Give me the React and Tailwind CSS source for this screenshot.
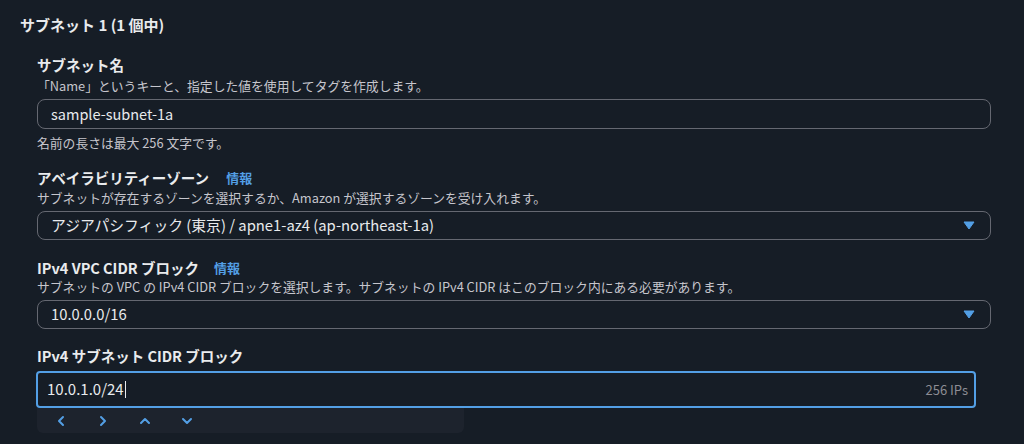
import React from "react";

const font = { fontFamily: '"Noto Sans CJK JP", "Noto Sans", sans-serif' };

function Caret() {
  return (
    <svg width="12" height="9" viewBox="0 0 12 9" className="shrink-0">
      <path d="M1 1 L11 1 L6 8 Z" fill="#539fe5" stroke="#539fe5" strokeWidth="1" strokeLinejoin="round" />
    </svg>
  );
}

function Chevron({ d }) {
  return (
    <svg width="14" height="14" viewBox="0 0 14 14" fill="none">
      <path d={d} stroke="#539fe5" strokeWidth="2" strokeLinecap="round" strokeLinejoin="round" />
    </svg>
  );
}

export default function App() {
  return (
    <div className="w-[1024px] h-[444px] overflow-hidden bg-[#161d26] text-[#e9ebed]" style={font}>
      <div className="pl-[20px] pt-[15px]">
        <div className="text-[15px] leading-[20px] font-bold">サブネット 1 (1 個中)</div>
      </div>
      <div className="pl-[37px] pr-[33px]">
        {/* Subnet name */}
        <div className="mt-[20px] text-[14.5px] leading-[20px] font-bold">サブネット名</div>
        <div className="mt-[2px] text-[12.8px] leading-[18px] text-[#c6c6cd]">「Name」というキーと、指定した値を使用してタグを作成します。</div>
        <div className="mt-[4px] h-[30px] rounded-[8px] border border-[#656871] flex items-center px-[13px] text-[14.5px]">
          sample-subnet-1a
        </div>
        <div className="mt-[5px] text-[12.8px] leading-[18px] text-[#c6c6cd]">名前の長さは最大 256 文字です。</div>

        {/* AZ */}
        <div className="mt-[16px] flex items-center text-[14.5px] leading-[20px]">
          <span className="font-bold">アベイラビリティーゾーン</span>
          <span className="ml-[17px] text-[13px] font-bold text-[#539fe5]">情報</span>
        </div>
        <div className="mt-[1px] text-[12.8px] leading-[18px] text-[#c6c6cd]">サブネットが存在するゾーンを選択するか、Amazon が選択するゾーンを受け入れます。</div>
        <div className="mt-[4px] h-[29px] rounded-[8px] border border-[#656871] flex items-center justify-between pl-[13px] pr-[15px] text-[14.8px]">
          <span>アジアパシフィック (東京) / apne1-az4 (ap-northeast-1a)</span>
          <Caret />
        </div>

        {/* VPC CIDR */}
        <div className="mt-[18px] flex items-center text-[14.5px] leading-[20px]">
          <span className="font-bold">IPv4 VPC CIDR ブロック</span>
          <span className="ml-[15px] text-[13px] font-bold text-[#539fe5]">情報</span>
        </div>
        <div className="mt-[0px] text-[12.8px] leading-[18px] text-[#c6c6cd]">サブネットの VPC の IPv4 CIDR ブロックを選択します。サブネットの IPv4 CIDR はこのブロック内にある必要があります。</div>
        <div className="mt-[4px] h-[29px] rounded-[8px] border border-[#656871] flex items-center justify-between pl-[13px] pr-[15px] text-[14.8px]">
          <span>10.0.0.0/16</span>
          <Caret />
        </div>

        {/* Subnet CIDR */}
        <div className="mt-[17px] text-[14.5px] leading-[20px] font-bold">IPv4 サブネット CIDR ブロック</div>
      </div>
      <div className="pl-[36px] pr-[48px]">
        <div className="mt-[5px] h-[37px] rounded-[4px] border-2 border-[#539fe5] flex items-center justify-between pl-[9px] pr-[6px]">
          <span className="text-[15px] flex items-center">
            10.0.1.0/24<span className="inline-block w-[1px] h-[17px] bg-[#e9ebed] ml-[1px]" />
          </span>
          <span className="text-[13px] text-[#8d8d94]">256 IPs</span>
        </div>
        <div className="ml-[1px] w-[427px] h-[25px] bg-[#1d232d] rounded-b-[6px] flex items-center pl-[17px]">
          <div className="flex items-center gap-[28px]">
            <Chevron d="M9 3 L5 7 L9 11" />
            <Chevron d="M5 3 L9 7 L5 11" />
            <Chevron d="M3 9 L7 5 L11 9" />
            <Chevron d="M3 5 L7 9 L11 5" />
          </div>
        </div>
      </div>
    </div>
  );
}
